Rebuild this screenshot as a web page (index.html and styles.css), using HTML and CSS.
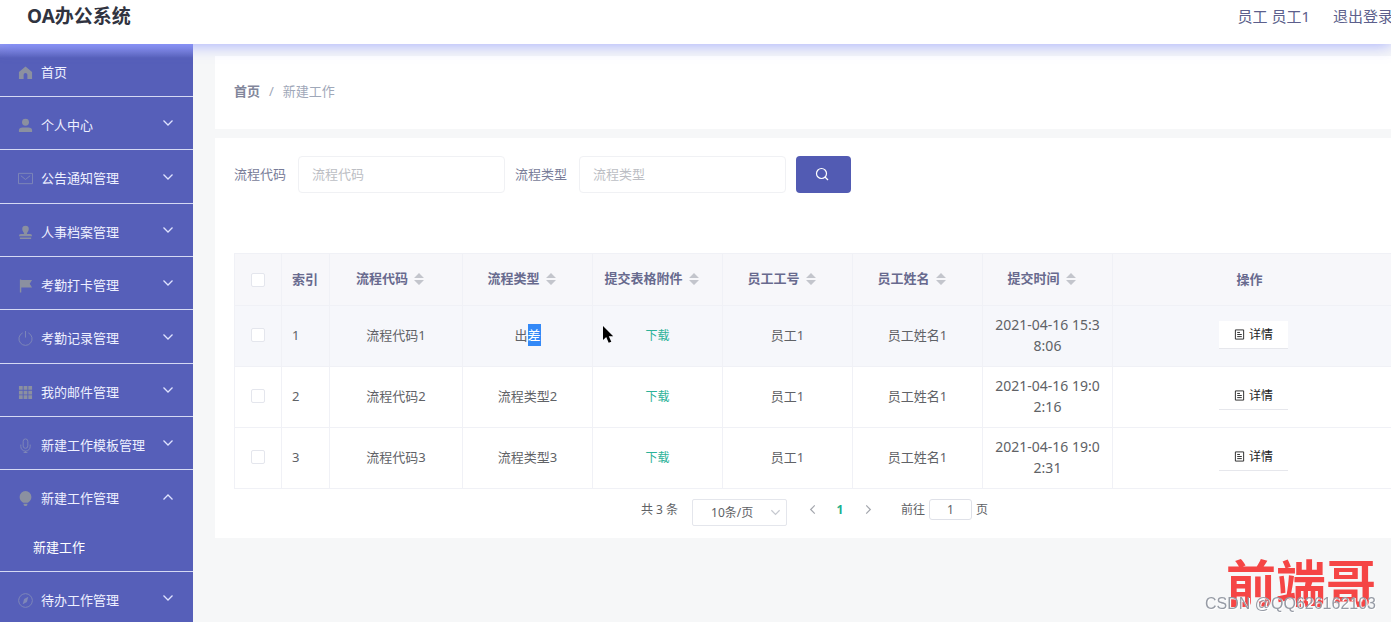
FILE: index.html
```html
<!DOCTYPE html>
<html lang="zh-CN">
<head>
<meta charset="utf-8">
<title>OA办公系统</title>
<link rel="stylesheet" href="styles.css">
</head>
<body>
<svg class="defs" aria-hidden="true">
  <symbol id="down" viewBox="0 0 12 12"><path d="M1.500 3.500 6 8l4.500-4.500" fill="none" stroke="currentColor" stroke-width="1.300"/></symbol>
  <symbol id="sort" viewBox="0 0 10 12"><path d="M5 0 10 5H0zM5 12 0 7h10z" fill="currentColor"/></symbol>
  <symbol id="doc" viewBox="0 0 12 12"><path d="M1.500 1h9v10h-9zM3.500 3.800h3M3.500 6h5M3.500 8.300h5" fill="none" stroke="currentColor"/></symbol>
</svg>
<header class="topbar">
  <h1 class="brand">OA办公系统</h1>
  <div class="account"><span>员工 员工1</span><a href="#">退出登录</a></div>
</header>
<div class="layout">
  <nav class="sidebar">
    <ul class="menu">
      <li><a class="item" href="#"><svg class="icon" viewBox="0 0 16 16"><path d="M8 1.500 1 7.500V15h5v-4.500a2 2 0 0 1 4 0V15h5V7.500z" fill="currentColor"/></svg><span>首页</span></a></li>
      <li><a class="item" href="#"><svg class="icon" viewBox="0 0 16 16"><circle cx="8" cy="4.500" r="3.700" fill="currentColor"/><path d="M1 15v-2q0-3 4-3h6q4 0 4 3v2z" fill="currentColor"/></svg><span>个人中心</span><svg class="arrow"><use href="#down"/></svg></a></li>
      <li><a class="item" href="#"><svg class="icon thin" viewBox="0 0 16 16"><path d="M.500 2.500h15v11H.500zM3 5l5 4 5-4" fill="none" stroke="currentColor"/></svg><span>公告通知管理</span><svg class="arrow"><use href="#down"/></svg></a></li>
      <li><a class="item" href="#"><svg class="icon" viewBox="0 0 16 16"><path d="M6.500 9.500C6.500 7.500 4.500 7 4.500 4.300a3.500 3.500 0 0 1 7 0C11.500 7 9.500 7.500 9.500 9.500H13q2 0 2 2.500H1q0-2.500 2-2.500zM2 13.300h12v1.500H2z" fill="currentColor"/></svg><span>人事档案管理</span><svg class="arrow"><use href="#down"/></svg></a></li>
      <li><a class="item" href="#"><svg class="icon" viewBox="0 0 16 16"><path d="M2 1.500h1.500V2H15l-2.500 4L15 10H3.500v5.500H2z" fill="currentColor"/></svg><span>考勤打卡管理</span><svg class="arrow"><use href="#down"/></svg></a></li>
      <li><a class="item" href="#"><svg class="icon thin" viewBox="0 0 16 16"><path d="M5 2a7 7 0 1 0 6 0M8 0v7" fill="none" stroke="currentColor"/></svg><span>考勤记录管理</span><svg class="arrow"><use href="#down"/></svg></a></li>
      <li><a class="item" href="#"><svg class="icon" viewBox="0 0 16 16"><path d="M1 1h4v4H1zM6 1h4v4H6zM11 1h4v4h-4zM1 6h4v4H1zM6 6h4v4H6zM11 6h4v4h-4zM1 11h4v4H1zM6 11h4v4H6zM11 11h4v4h-4z" fill="currentColor"/></svg><span>我的邮件管理</span><svg class="arrow"><use href="#down"/></svg></a></li>
      <li><a class="item" href="#"><svg class="icon thin" viewBox="0 0 16 16"><path d="M5.500 3.500a2.500 2.500 0 0 1 5 0v5a2.500 2.500 0 0 1-5 0zM3 7v2a5 5 0 0 0 10 0V7M8 14v2M6 15.500h4" fill="none" stroke="currentColor"/></svg><span>新建工作模板管理</span><svg class="arrow"><use href="#down"/></svg></a></li>
      <li class="open"><a class="item" href="#"><svg class="icon" viewBox="0 0 16 16"><path d="M8 0a6.300 6.300 0 0 0-6.300 6.300c0 3 2 4.700 3.800 6.200h5c1.800-1.500 3.800-3.200 3.800-6.200A6.300 6.300 0 0 0 8 0zM6 13.500h4V15l-1 1H7l-1-1z" fill="currentColor"/></svg><span>新建工作管理</span><svg class="arrow up"><use href="#down"/></svg></a>
        <a class="subitem" href="#">新建工作</a></li>
      <li><a class="item" href="#"><svg class="icon thin" viewBox="0 0 16 16"><circle cx="8" cy="8" r="7.300" fill="none" stroke="currentColor"/><path d="M11 4 9.500 9.500 5 12l1.500-5.500z" fill="currentColor"/></svg><span>待办工作管理</span><svg class="arrow"><use href="#down"/></svg></a></li>
    </ul>
  </nav>
  <main class="content">
    <nav class="panel crumbs"><a href="#">首页</a><span class="slash">/</span><span>新建工作</span></nav>
    <section class="panel records">
      <form class="search">
        <div class="field"><label for="code">流程代码</label><input id="code" type="text" placeholder="流程代码"></div>
        <div class="field"><label for="kind">流程类型</label><input id="kind" type="text" placeholder="流程类型"></div>
        <button class="go" type="button" aria-label="查询"><svg viewBox="0 0 14 14"><circle cx="6.500" cy="6.500" r="5" fill="none" stroke="currentColor" stroke-width="1.200"/><path d="m10 10 3 3" stroke="currentColor" stroke-width="1.200"/></svg></button>
      </form>
      <table class="grid">
        <colgroup><col class="c-check"><col class="c-index"><col class="c-code"><col class="c-mid"><col class="c-mid"><col class="c-mid"><col class="c-mid"><col class="c-mid"><col></colgroup>
        <thead><tr>
          <th><input type="checkbox" aria-label="全选"></th>
          <th class="index">索引</th>
          <th class="sortable">流程代码<svg><use href="#sort"/></svg></th>
          <th class="sortable">流程类型<svg><use href="#sort"/></svg></th>
          <th class="sortable">提交表格附件<svg><use href="#sort"/></svg></th>
          <th class="sortable">员工工号<svg><use href="#sort"/></svg></th>
          <th class="sortable">员工姓名<svg><use href="#sort"/></svg></th>
          <th class="sortable">提交时间<svg><use href="#sort"/></svg></th>
          <th class="actions">操作</th>
        </tr></thead>
        <tbody>
          <tr class="hover"><td><input type="checkbox" aria-label="选择第1行"></td><td class="index">1</td><td>流程代码1</td><td>出<mark>差</mark></td><td class="file"><a href="#">下载</a><svg class="pointer" viewBox="0 0 11 18"><path d="M0 0v14l3.200-3 2.500 5.800 2.600-1.100-2.500-5.500h4.400z" fill="#000"/></svg></td><td>员工1</td><td>员工姓名1</td><td class="time">2021-04-16 15:38:06</td><td><button class="detail" type="button"><svg><use href="#doc"/></svg>详情</button></td></tr>
          <tr><td><input type="checkbox" aria-label="选择第2行"></td><td class="index">2</td><td>流程代码2</td><td>流程类型2</td><td><a href="#">下载</a></td><td>员工1</td><td>员工姓名1</td><td class="time">2021-04-16 19:02:16</td><td><button class="detail" type="button"><svg><use href="#doc"/></svg>详情</button></td></tr>
          <tr><td><input type="checkbox" aria-label="选择第3行"></td><td class="index">3</td><td>流程代码3</td><td>流程类型3</td><td><a href="#">下载</a></td><td>员工1</td><td>员工姓名1</td><td class="time">2021-04-16 19:02:31</td><td><button class="detail" type="button"><svg><use href="#doc"/></svg>详情</button></td></tr>
        </tbody>
      </table>
      <div class="pager">
        <span>共 3 条</span>
        <div class="size"><select aria-label="每页条数"><option>10条/页</option></select><svg><use href="#down"/></svg></div>
        <div class="pages">
          <button type="button" aria-label="上一页"><svg class="prev"><use href="#down"/></svg></button>
          <button class="current" type="button">1</button>
          <button type="button" aria-label="下一页"><svg class="next"><use href="#down"/></svg></button>
        </div>
        <div class="jump"><label for="page">前往</label><input id="page" type="text" value="1"><span>页</span></div>
      </div>
    </section>
  </main>
</div>
<div class="watermark"><span class="signature">前端哥</span><span class="credit">CSDN @QQ626162103</span></div>
</body>
</html>
```
FILE: styles.css
```css
* { box-sizing: border-box; }
body {
  margin: 0;
  height: 100vh;
  overflow: hidden;
  display: flex;
  flex-direction: column;
  background: #f6f7f8;
  color: #606266;
  font: 13px/21px "Noto Sans", "Noto Sans CJK SC", sans-serif;
}
a { color: inherit; text-decoration: none; }
button, input, select { font: inherit; color: inherit; }
.defs { display: none; }

.topbar {
  position: relative;
  z-index: 2;
  flex: none;
  height: 44px;
  padding: 0 0 12px 27px;
  display: flex;
  align-items: center;
  justify-content: space-between;
  background: #fff;
  box-shadow: 0 1px 16px rgba(108, 122, 255, .6);
}
.brand { margin: 0; font-size: 19px; line-height: 24px; color: #303340; }
.account { display: flex; gap: 23px; margin-right: -2px; font-size: 15px; color: #5c5f8c; white-space: nowrap; }

.layout { flex: 1; min-height: 0; display: flex; }
.sidebar { flex: none; width: 193px; overflow: hidden; background: linear-gradient(#949cf0, #565fb9 14px); color: #eef0ff; }
.menu { margin: 0; padding: 0; list-style: none; }
.menu li { border-bottom: 1px solid #d5d9f4; }
.item { height: 52px; padding: 4px 19px 0 18px; display: flex; align-items: center; gap: 8px; }
.menu li:nth-child(3n) > .item { height: 53px; }
.icon { width: 15px; height: 15px; color: #8b90a0; }
.thin { color: #7f87b8; }
.arrow { width: 12px; height: 12px; margin: 0 0 4px auto; color: #dfe3ff; }
.up { transform: rotate(180deg); }
.subitem { display: block; padding: 0 33px; line-height: 48px; color: #fff; }

.content { flex: 1; min-width: 0; padding: 12px 0 0 22px; display: flex; flex-direction: column; gap: 9px; }
.panel { background: #fff; padding: 18px 0 0 19px; }
.crumbs { height: 73px; padding: 0 19px 2px; display: flex; align-items: center; color: #9fa8b9; }
.crumbs a { font-weight: 700; color: #82869b; }
.slash { margin: 0 9px; }

.records { margin-right: -4px; padding-bottom: 12px; }
.search { display: flex; align-items: center; gap: 10px; margin-bottom: 60px; color: #787c98; }
.field { display: flex; align-items: center; gap: 12px; }
.field input { width: 207px; height: 37px; padding: 0 13px 2px; border: 1px solid #f0f1f4; border-radius: 4px; background: #fff; outline: 0; }
.field input::placeholder { color: #bcbec4; }
.go { width: 55px; height: 37px; padding: 0 0 3px; border: 0; border-radius: 4px; background: #525bb3; color: #fff; }
.go svg { width: 14px; height: 14px; margin-right: 4px; vertical-align: middle; }

.grid { width: 100%; table-layout: fixed; border-collapse: collapse; text-align: center; }
.c-check { width: 47px; }
.c-index { width: 48px; }
.c-code { width: 133px; }
.c-mid { width: 130px; }
.grid th, .grid td { padding: 0 10px 2px; border: 1px solid #f0f1f6; }
.grid th { height: 52px; padding-top: 2px; background: #f7f7fa; color: #686a8e; }
.grid td { height: 61px; }
.hover { background: #f6f7fb; }
.grid .index { text-align: left; }
.grid td a { font-size: 12px; color: #2cb298; }
.grid .time { font-size: 14px; word-break: break-all; }
.grid .sortable { padding: 0 12px 2px 0; white-space: nowrap; }
.grid .actions { padding-right: 18px; }
.sortable svg { width: 10px; height: 12px; margin-left: 6px; vertical-align: -2px; color: #c3c5cc; }
.grid input { appearance: none; display: block; width: 14px; height: 14px; margin: 0 auto; border: 1px solid #e4e6ed; border-radius: 2px; background: #fff; }
mark { padding: 2px 0; background: #3389f7; color: #fff; }
.file { position: relative; }
.pointer { position: absolute; left: 10px; top: 20px; width: 11px; height: 18px; }
.detail { display: inline-flex; align-items: center; gap: 4px; height: 28px; padding: 0 15px; border: 0; border-bottom: 1px solid #e6e7ec; background: #fff; color: #222; font-size: 12px; }
.detail svg { width: 11px; height: 11px; }

.pager { display: flex; justify-content: center; align-items: flex-start; padding: 10px 0 0; font-size: 12px; color: #606266; }
.size { position: relative; margin-left: 14px; }
.size select { appearance: none; width: 95px; height: 27px; padding: 0 16px 0 18px; border: 1px solid #e4e6ec; border-radius: 2px; background: #fff; }
.size svg { position: absolute; right: 6px; top: 8px; width: 11px; height: 11px; color: #c6c9d0; }
.pages { display: flex; gap: 8px; margin-left: 15px; }
.pages button { width: 20px; height: 21px; padding: 0; border: 0; background: none; color: #a3a6ad; line-height: 21px; }
.pages svg { width: 11px; height: 11px; vertical-align: -1px; }
.pages .current { color: #22b08c; font-weight: 700; }
.prev { transform: rotate(90deg); }
.next { transform: rotate(-90deg); }
.jump { display: flex; gap: 4px; margin-left: 23px; }
.jump input { width: 43px; height: 21px; padding: 0; border: 1px solid #dfe1e8; border-radius: 3px; text-align: center; }

.watermark { position: fixed; z-index: 3; right: 15px; bottom: 6px; display: grid; justify-items: end; }
.signature, .credit { grid-area: 1 / 1; }
.signature { padding-bottom: 6px; color: #f54545; font: 700 50px/60px "Noto Sans CJK SC", sans-serif; }
.credit { align-self: end; color: #969ba5; font: 16px/24px "Liberation Sans", sans-serif; text-shadow: 1px 1px 0 #fff; }
```
